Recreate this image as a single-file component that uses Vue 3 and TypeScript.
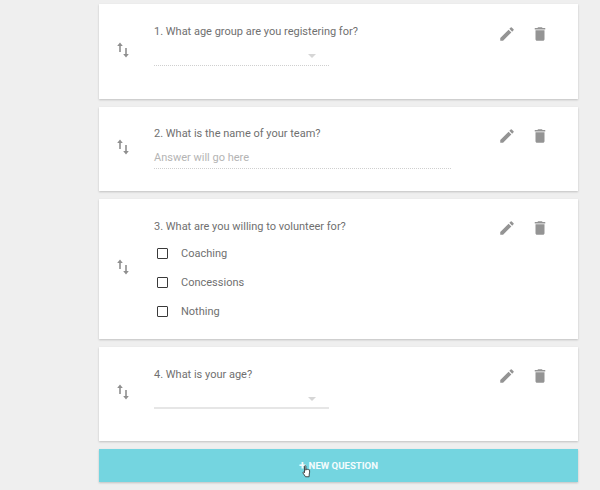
<script setup lang="ts">
interface Question {
  id: number
  text: string
  type: 'select' | 'input' | 'checks'
  options?: string[]
}

const questions: Question[] = [
  { id: 1, text: '1. What age group are you registering for?', type: 'select' },
  { id: 2, text: '2. What is the name of your team?', type: 'input' },
  { id: 3, text: '3. What are you willing to volunteer for?', type: 'checks', options: ['Coaching', 'Concessions', 'Nothing'] },
  { id: 4, text: '4. What is your age?', type: 'select' }
]
</script>

<template>
  <div class="page">
    <div v-for="q in questions" :key="q.id" class="card" :class="'card-' + q.type">
      <div class="handle">
        <svg width="14" height="18" viewBox="0 0 14 18">
          <path d="M4 1.500 L6.800 5 H4.800 V11 H3.200 V5 H1.200 Z M9.200 7 H10.800 V13 H12.800 L10 16.500 L7.200 13 H9.200 Z" fill="#8f8f8f" />
        </svg>
      </div>
      <div class="body">
        <div class="question">{{ q.text }}</div>
        <div v-if="q.type === 'select'" class="select"><span class="caret"></span></div>
        <div v-else-if="q.type === 'input'" class="answer">Answer will go here</div>
        <div v-else class="checks">
          <label v-for="o in q.options" :key="o" class="check"><span class="box"></span>{{ o }}</label>
        </div>
      </div>
      <div class="actions">
        <svg width="18" height="18" viewBox="0 0 24 24">
          <path d="M3 17.250V21h3.750L17.810 9.940l-3.750-3.750L3 17.250zM20.710 7.040a1 1 0 0 0 0-1.410l-2.340-2.340a1 1 0 0 0-1.410 0l-1.830 1.830 3.750 3.750 1.830-1.830z" fill="#949494" />
        </svg>
        <svg width="18" height="18" viewBox="0 0 24 24">
          <path d="M6 19c0 1.100.9 2 2 2h8c1.100 0 2-.9 2-2V7H6v12zM19 4h-3.500l-1-1h-5l-1 1H5v2h14V4z" fill="#949494" />
        </svg>
      </div>
    </div>
    <button class="add">
      <span class="plus">+</span>NEW QUESTION
      <svg class="cursor" width="10" height="13" viewBox="0 0 12 15">
        <path d="M3 1.200c0-.9 1.600-.9 1.600 0V6l.2-.8c.3-.7 1.300-.6 1.400.1.3-.6 1.300-.5 1.400.2.4-.5 1.300-.3 1.400.4.2 1.400.3 3.300-.3 4.600L8.500 13.800H4.200L1.300 9.500c-.6-.9.5-1.800 1.300-1L3 9V1.200z" fill="#fff" stroke="#2c2c2c" stroke-width="1" />
      </svg>
    </button>
  </div>
</template>

<style>
html, body {
  margin: 0;
  background: #efefef;
}
</style>

<style scoped>
.page {
  width: 600px;
  height: 490px;
  box-sizing: border-box;
  padding: 4px 22px 0 99px;
  display: flex;
  flex-direction: column;
  gap: 8px;
  overflow: hidden;
  font-family: Roboto, "Liberation Sans", sans-serif;
  font-size: 11px;
  color: #707070;
}
.card {
  background: #fff;
  box-shadow: 0 1px 2px rgba(0, 0, 0, 0.2);
  display: flex;
  align-items: stretch;
  flex: none;
}
.card-select { height: 94px; }
.card:first-child { height: 95px; }
.card-input { height: 84px; }
.card-checks { height: 140px; }
.handle {
  width: 47px;
  flex: none;
  display: flex;
  align-items: center;
  justify-content: center;
  padding-bottom: 4px;
  box-sizing: border-box;
}
.body {
  flex: 1;
  padding: 20px 0 0 8px;
}
.card-input .body {
  padding-top: 19px;
}
.question {
  line-height: 15px;
}
.select {
  width: 175px;
  height: 15px;
  margin-top: 11px;
  border-bottom: 1px dotted #cfcfcf;
  position: relative;
}
.card:last-of-type .select {
  border-bottom: 2px solid #e6e6e6;
  height: 14px;
}
.caret {
  position: absolute;
  right: 13px;
  top: 4px;
  border-left: 4px solid transparent;
  border-right: 4px solid transparent;
  border-top: 4px solid #d6d6d6;
}
.answer {
  width: 297px;
  margin-top: 9px;
  padding-bottom: 3px;
  border-bottom: 1px dotted #cfcfcf;
  color: #b4b4b4;
  line-height: 15px;
}
.checks {
  display: flex;
  flex-direction: column;
  gap: 14px;
  margin-top: 12px;
  padding-left: 3px;
}
.check {
  display: flex;
  align-items: center;
  gap: 13px;
  line-height: 15px;
}
.box {
  width: 9px;
  height: 9px;
  border: 1.500px solid #3a3a3a;
  border-radius: 1px;
}
.actions {
  width: 80px;
  flex: none;
  display: flex;
  gap: 15px;
  padding-top: 20px;
  align-items: flex-start;
}
.card:first-child .actions {
  padding-top: 21px;
}
.add {
  height: 33px;
  flex: none;
  border: none;
  padding: 0;
  background: #74d5e0;
  box-shadow: 0 1px 2px rgba(0, 0, 0, 0.2);
  color: #f4fcfd;
  font: 700 9.600px Roboto, "Liberation Sans", sans-serif;
  position: relative;
  display: flex;
  align-items: center;
  justify-content: center;
}
.plus {
  font-size: 12px;
  margin-right: 3px;
}
.cursor {
  position: absolute;
  left: 203px;
  top: 16px;
}
</style>
